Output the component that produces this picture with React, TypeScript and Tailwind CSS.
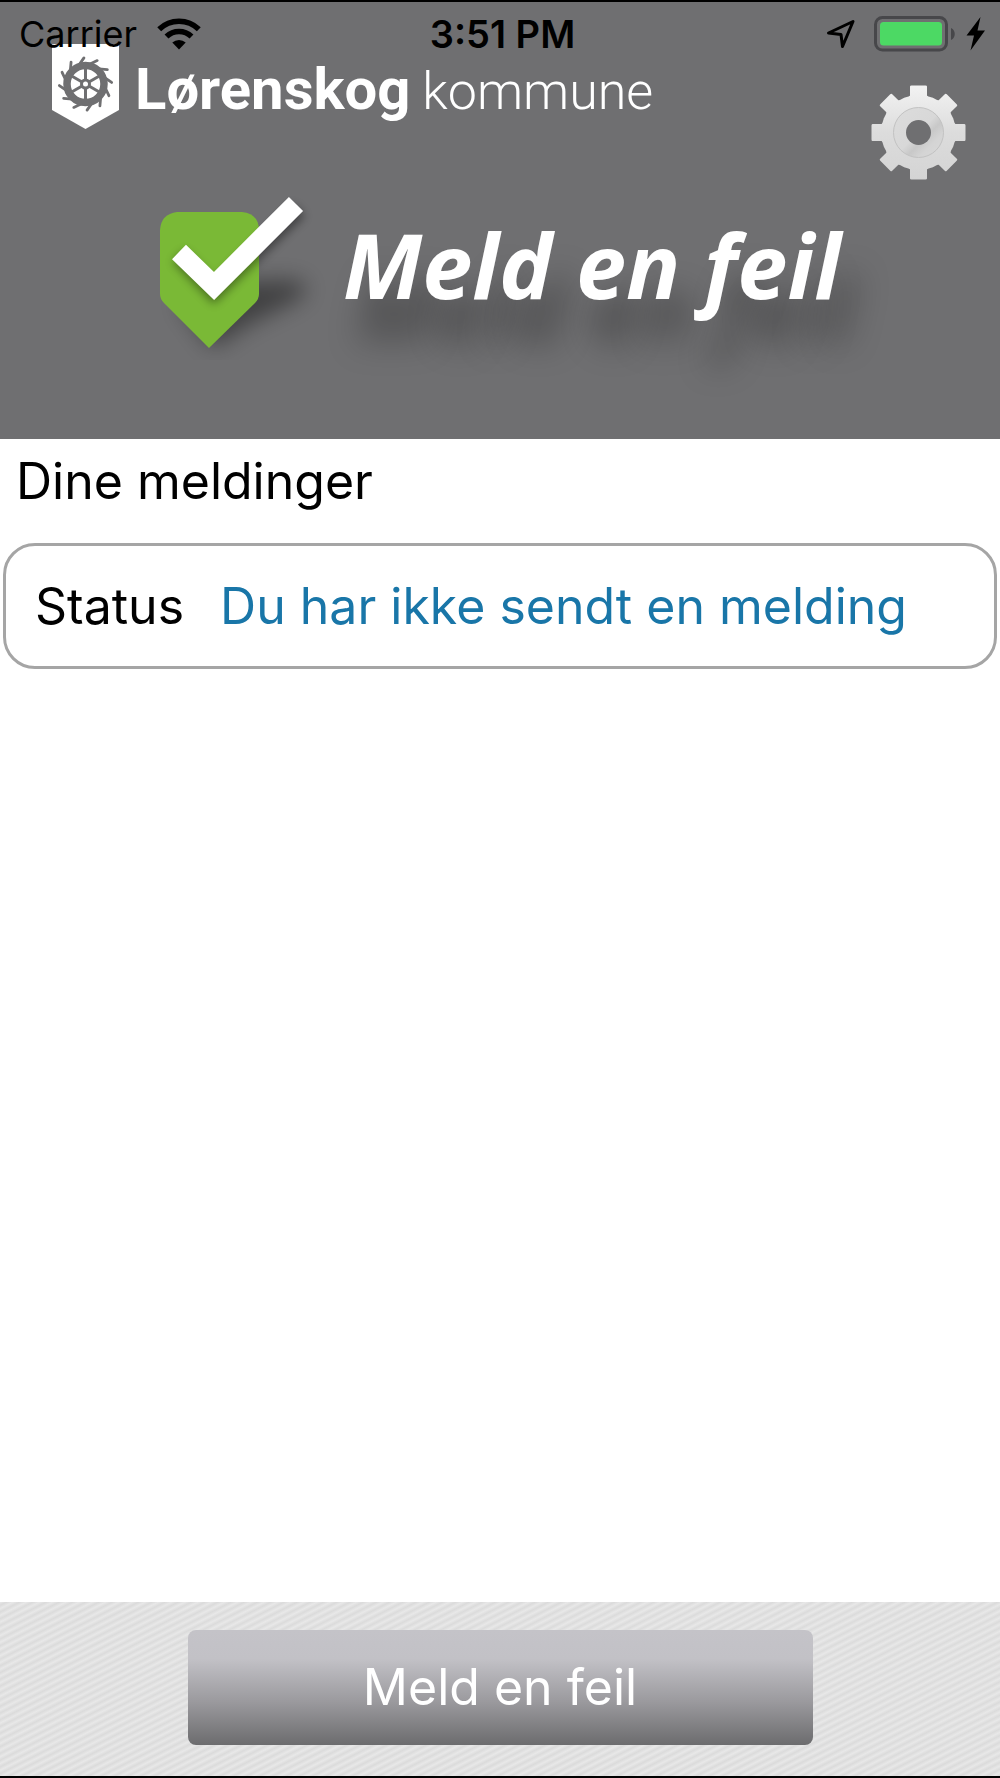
import React from "react";

const toothAngles = [0, 45, 90, 135, 180, 225, 270, 315];
const spokeAngles = [0, 60, 120];
const bladeAngles = [0, 30, 60, 90, 120, 150, 180, 210, 240, 270, 300, 330];

const WifiIcon: React.FC = () => (
  <svg width="44" height="32" viewBox="0 0 44 32" aria-hidden="true">
    <path d="M2.2 11.2A28.5 28.5 0 0 1 41.8 11.2" fill="none" stroke="#000" strokeWidth="5.6" />
    <path d="M9.5 18.5A18 18 0 0 1 34.5 18.5" fill="none" stroke="#000" strokeWidth="5.6" />
    <path d="M22 31.5L15.3 24.6A9.6 9.6 0 0 1 28.7 24.6Z" fill="#000" />
  </svg>
);

const LocationIcon: React.FC = () => (
  <svg width="30" height="30" viewBox="0 0 30 30" aria-hidden="true">
    <path
      d="M2.5 14L27 2.5L16.5 27.5L15 15.5Z"
      fill="none"
      stroke="#000"
      strokeWidth="3"
      strokeLinejoin="round"
    />
  </svg>
);

const BatteryIcon: React.FC = () => (
  <svg width="82" height="36" viewBox="0 0 82 36" aria-hidden="true">
    <rect x="1.5" y="1.5" width="71" height="32.5" rx="7" fill="none" stroke="#47474a" strokeWidth="3" />
    <rect x="6" y="6" width="62" height="23.5" rx="3.5" fill="#4cd964" />
    <path d="M77 12C82 14 82 22 77 24Z" fill="#47474a" />
  </svg>
);

const BoltIcon: React.FC = () => (
  <svg width="20" height="34" viewBox="0 0 20 34" aria-hidden="true">
    <path d="M14.5 0L0.5 18.5H8L4.5 33.5L19 13.5H11.5Z" fill="#000" />
  </svg>
);

const MunicipalityShield: React.FC = () => (
  <svg width="67" height="86" viewBox="0 0 67 86" aria-hidden="true">
    <path d="M0 0H67V66L33.5 85L0 66Z" fill="#fff" />
    <g transform="translate(33.5 40)" stroke="#6f6f71" fill="none">
      <circle r="18.5" strokeWidth="7.5" />
      {spokeAngles.map((angle) => (
        <path key={angle} d="M0 -17V17" strokeWidth="3" transform={`rotate(${angle})`} />
      ))}
      {bladeAngles.map((angle) => (
        <path
          key={angle}
          d="M-3 -20L3 -26"
          strokeWidth="2.8"
          strokeLinecap="round"
          transform={`rotate(${angle - 10})`}
        />
      ))}
      <circle r="5.5" fill="#6f6f71" stroke="none" />
      <circle r="2.5" fill="#fff" stroke="none" />
    </g>
  </svg>
);

const GearIcon: React.FC = () => (
  <svg width="95" height="95" viewBox="0 0 95 95" aria-hidden="true">
    <defs>
      <linearGradient id="gear" gradientUnits="userSpaceOnUse" x1="0" y1="0" x2="0" y2="95">
        <stop offset="0" stopColor="#f3f3f3" />
        <stop offset="0.5" stopColor="#dcdcdc" />
        <stop offset="1" stopColor="#d4d4d4" />
      </linearGradient>
      <linearGradient id="gearRing" x1="0" y1="0" x2="1" y2="1">
        <stop offset="0" stopColor="#dcdcdc" />
        <stop offset="0.5" stopColor="#d8d8d8" />
        <stop offset="0.62" stopColor="#c8c8c8" />
        <stop offset="0.75" stopColor="#d4d4d4" />
        <stop offset="1" stopColor="#dadada" />
      </linearGradient>
      <mask id="gearShape">
        <g fill="#fff" transform="translate(47.5 47.5)">
          <circle r="37.5" />
          {toothAngles.map((angle) => (
            <path key={angle} d="M-11 -34L-8.5 -37V-46Q-8.5 -47 -7 -47H7Q8.5 -47 8.5 -46V-37L11 -34Z" transform={`rotate(${angle})`} />
          ))}
          <circle r="12.5" fill="#000" />
        </g>
      </mask>
    </defs>
    <g mask="url(#gearShape)">
      <rect width="95" height="95" fill="url(#gear)" />
      <circle cx="47.5" cy="47.5" r="25" fill="url(#gearRing)" stroke="#c2c2c2" strokeWidth="1" />
    </g>
  </svg>
);

const CheckBadge: React.FC = () => (
  <svg width="180" height="170" viewBox="0 0 180 170" className="shrink-0" aria-hidden="true">
    <defs>
      <filter id="softShadow" x="-40%" y="-60%" width="180%" height="220%">
        <feGaussianBlur stdDeviation="11" />
      </filter>
      <filter id="checkShadow" x="-30%" y="-30%" width="160%" height="160%">
        <feGaussianBlur stdDeviation="5" />
      </filter>
    </defs>
    <path d="M20 112L60 92L134 90Q158 96 138 110L90 134L54 158Z" fill="#000" opacity="0.42" filter="url(#softShadow)" />
    <path d="M18 22H83Q100 24 100 40V104Q100 109 96 113L50 158L5 113Q1 109 1 104V40Q2 24 18 22Z" fill="#7ab936" />
    <path d="M20 66L55 102L140 20" stroke="#000" strokeWidth="17" fill="none" opacity="0.4" filter="url(#checkShadow)" />
    <path d="M20 62L55 96L137 14" stroke="#fff" strokeWidth="20" fill="none" />
  </svg>
);

const StatusBar: React.FC = () => (
  <div className="absolute inset-x-0 top-0 z-10 grid grid-cols-3 items-center pt-2 pr-[14px] pl-[19px] font-[Inter,sans-serif] text-[36px] leading-[48px] text-black">
    <div className="flex items-center gap-5">
      <span>Carrier</span>
      <WifiIcon />
    </div>
    <div className="text-center text-[38px] font-semibold">3:51 PM</div>
    <div className="flex items-center justify-end gap-[10px]">
      <div className="pr-2">
        <LocationIcon />
      </div>
      <BatteryIcon />
      <BoltIcon />
    </div>
  </div>
);

const App: React.FC = () => {
  return (
    <div className="flex min-h-screen flex-col border-y-2 border-black bg-white font-[Inter,sans-serif]">
      <header className="relative bg-[#6f6f71] pt-[42px] pb-[79px] text-white">
        <StatusBar />

        {/* Municipality logo and settings */}
        <div className="flex items-start justify-between pr-[34px] pl-[52px]">
          <div className="flex items-start gap-4 font-[Roboto,sans-serif] leading-[90px]">
            <MunicipalityShield />
            <div className="flex items-baseline gap-3">
              <span className="text-[58px] font-bold">Lørenskog</span>
              <span className="text-[52px] font-light">kommune</span>
            </div>
          </div>
          <button type="button" aria-label="Innstillinger" className="mt-[41px]">
            <GearIcon />
          </button>
        </div>

        {/* App title */}
        <div className="mt-[10px] flex items-start pl-[159px]">
          <CheckBadge />
          <h1 className="mt-3 ml-1 font-['Open_Sans',sans-serif] text-[90px] leading-[124px] font-bold whitespace-nowrap italic [text-shadow:14px_44px_32px_rgba(0,0,0,0.35)]">
            Meld en feil
          </h1>
        </div>
      </header>

      <main className="flex-1">
        <h2 className="px-4 pt-[10px] text-[50px] leading-[64px] text-black">
          Dine meldinger
        </h2>
        <section className="mx-[3px] mt-[30px] flex items-center gap-9 rounded-[32px] border-3 border-[#a5a5a5] px-[29px] py-7 text-[50px] leading-[64px]">
          <span className="text-black">Status</span>
          <span className="text-[#1976a8]">Du har ikke sendt en melding</span>
        </section>
      </main>

      <footer className="flex justify-center bg-[repeating-linear-gradient(153deg,#e8e8e8_0px,#dbdbdb_3px,#e8e8e8_6px)] pt-7 pb-[31px]">
        <button
          type="button"
          className="h-[115px] w-5/8 rounded-lg bg-[linear-gradient(#c4c3c8_0%,#c2c1c6_25%,#9b9a9e_62%,#6c6c6e_100%)] text-[50px] text-white"
        >
          Meld en feil
        </button>
      </footer>
    </div>
  );
};

export default App;
